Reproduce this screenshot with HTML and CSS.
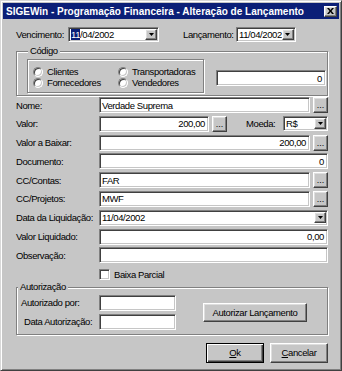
FILE: index.html
```html
<!DOCTYPE html>
<html>
<head>
<meta charset="utf-8">
<link rel="stylesheet" href="styles.css">
</head>
<body>
<div class="window">
  <div class="titlebar">
    <span class="title">SIGEWin - Programação Financeira - Alteração de Lançamento</span>
    <span class="close btn"><svg width="7" height="6" viewBox="0 0 7 6"><path d="M0 0h2l1.5 2 1.5-2h2l-2.5 3 2.5 3h-2l-1.5-2-1.5 2h-2l2.5-3z" fill="#000"/></svg></span>
  </div>
  <div class="content">
    <div class="row-top">
      <span class="lbl l-venc">Vencimento:</span>
      <div class="field combo c-venc"><span class="val"><span class="sel">11</span>/04/2002</span><span class="btn arrow"><svg width="5" height="3" viewBox="0 0 5 3"><path d="M0 0h5l-2.5 3z" fill="#000"/></svg></span></div>
      <span class="lbl l-lanc">Lançamento:</span>
      <div class="field combo c-lanc"><span class="val">11/04/2002</span><span class="btn arrow"><svg width="5" height="3" viewBox="0 0 5 3"><path d="M0 0h5l-2.5 3z" fill="#000"/></svg></span></div>
    </div>

    <div class="group g-codigo">
      <span class="legend">Código</span>
      <div class="group-body">
        <div class="panel">
          <div class="radios">
            <label class="radio"><span class="rb"></span>Clientes</label>
            <label class="radio"><span class="rb"></span>Transportadoras</label>
            <label class="radio"><span class="rb"></span>Fornecedores</label>
            <label class="radio"><span class="rb"></span>Vendedores</label>
          </div>
        </div>
        <div class="field num codigo-num">0</div>
      </div>
    </div>

    <div class="frow first">
      <span class="flbl">Nome:</span>
      <div class="field grow">Verdade Suprema</div>
      <span class="btn dots">...</span>
    </div>
    <div class="frow">
      <span class="flbl">Valor:</span>
      <div class="field num valor">200,00</div>
      <span class="btn dots">...</span>
      <span class="lbl l-moeda">Moeda:</span>
      <div class="field combo grow moeda"><span class="val">R$</span><span class="btn arrow"><svg width="5" height="3" viewBox="0 0 5 3"><path d="M0 0h5l-2.5 3z" fill="#000"/></svg></span></div>
    </div>
    <div class="frow">
      <span class="flbl">Valor a Baixar:</span>
      <div class="field num grow">200,00</div>
      <span class="btn dots">...</span>
    </div>
    <div class="frow">
      <span class="flbl">Documento:</span>
      <div class="field num grow">0</div>
    </div>
    <div class="frow">
      <span class="flbl">CC/Contas:</span>
      <div class="field grow">FAR</div>
      <span class="btn dots">...</span>
    </div>
    <div class="frow">
      <span class="flbl">CC/Projetos:</span>
      <div class="field grow">MWF</div>
      <span class="btn dots">...</span>
    </div>
    <div class="frow">
      <span class="flbl">Data da Liquidação:</span>
      <div class="field combo grow"><span class="val">11/04/2002</span><span class="btn arrow"><svg width="5" height="3" viewBox="0 0 5 3"><path d="M0 0h5l-2.5 3z" fill="#000"/></svg></span></div>
    </div>
    <div class="frow">
      <span class="flbl">Valor Liquidado:</span>
      <div class="field num grow">0,00</div>
    </div>
    <div class="frow">
      <span class="flbl">Observação:</span>
      <div class="field grow"></div>
    </div>
    <div class="check-row">
      <span class="cb"></span><span>Baixa Parcial</span>
    </div>

    <div class="group g-aut">
      <span class="legend">Autorização</span>
      <div class="group-body aut-body">
        <div class="aut-fields">
          <div class="arow"><span class="albl a1">Autorizado por:</span><div class="field afield"></div></div>
          <div class="arow"><span class="albl a2">Data Autorização:</span><div class="field afield"></div></div>
        </div>
        <span class="btn pbtn autorizar">Autorizar Lançamento</span>
      </div>
    </div>

    <div class="actions">
      <span class="btn pbtn ok default"><u>O</u>k</span>
      <span class="btn pbtn cancel"><u>C</u>ancelar</span>
    </div>
  </div>
</div>
</body>
</html>
```

FILE: styles.css
```css
* { box-sizing: border-box; }
html, body { margin: 0; padding: 0; }
body {
  width: 342px;
  height: 371px;
  overflow: hidden;
  background: #c6c6c6;
  font-family: "Liberation Sans", Arial, sans-serif;
  font-size: 9.5px;
  letter-spacing: -0.4px;
  color: #000;
}
.window {
  width: 342px;
  height: 371px;
  background: #c6c6c6;
  border: 1px solid;
  border-color: #d8d8d8 #404040 #404040 #d8d8d8;
  box-shadow: inset 1px 1px #fff, inset -1px -1px #808080;
  padding: 2px;
  display: flex;
  flex-direction: column;
}
.titlebar {
  height: 16px;
  flex: none;
  background: #0b1f77;
  color: #fff;
  display: flex;
  align-items: center;
  justify-content: space-between;
  padding: 0 2px 0 3px;
  font-weight: bold;
  font-size: 10px;
  letter-spacing: 0;
  white-space: nowrap;
}
.btn {
  background: #c6c6c6;
  border: 1px solid;
  border-color: #fff #404040 #404040 #fff;
  box-shadow: inset -1px -1px #808080, inset 1px 1px #dedede;
  display: flex;
  align-items: center;
  justify-content: center;
  flex: none;
}
.close { width: 13px; height: 11px; }
.content {
  flex: 1;
  display: flex;
  flex-direction: column;
  padding: 8px 11px 0 13px;
}
.lbl { white-space: nowrap; flex: none; }
.row-top {
  display: flex;
  align-items: center;
  height: 15px;
  flex: none;
}
.l-venc { width: 52px; }
.c-venc { width: 91px; }
.l-lanc { margin-left: 24px; width: 53px; }
.c-lanc { flex: 1; }
.field {
  height: 16px;
  background: #fff;
  border: 1px solid;
  border-color: #808080 #fff #fff #808080;
  box-shadow: inset 1px 1px #404040, inset -1px -1px #c6c6c6;
  padding: 0 3px 0 2px;
  display: flex;
  align-items: center;
  white-space: nowrap;
  overflow: hidden;
  flex: none;
}
.row-top .field { height: 15px; }
.grow { flex: 1; }
.num { justify-content: flex-end; }
.combo { padding: 0 1px 0 2px; }
.combo .val { flex: 1; }
.sel { background: #0b1f77; color: #fff; }
.arrow { width: 12px; height: 11px; margin-left: auto; }
.arrow svg { display: block; }

.group {
  border: 1px solid #808080;
  box-shadow: inset 1px 1px #fff, 1px 1px #fff;
  display: flex;
  flex-direction: column;
  flex: none;
}
.legend {
  align-self: flex-start;
  margin: -7px 0 0 1px;
  padding: 0 2px;
  line-height: 11px;
  height: 11px;
  background: #c6c6c6;
  white-space: nowrap;
}
.g-codigo {
  margin-top: 9px;
  padding: 0 1px 2px 10px;
}
.group-body { display: flex; align-items: flex-start; }
.panel {
  margin-top: 3px;
  width: 177px;
  height: 34px;
  border: 1px solid #808080;
  box-shadow: inset 1px 1px #fff, 1px 1px #fff;
  flex: none;
}
.radios {
  display: grid;
  grid-template-columns: 85px 1fr;
  grid-auto-rows: 11px;
  padding: 6px 0 0 5px;
}
.radio { display: flex; align-items: center; gap: 4px; white-space: nowrap; }
.rb, .cb {
  width: 10px;
  height: 10px;
  background: #fff;
  border: 1px solid;
  border-color: #808080 #fff #fff #808080;
  box-shadow: inset 1px 1px #404040, inset -1px -1px #c6c6c6;
  flex: none;
}
.rb { border-radius: 50%; }
.codigo-num { margin: 14px 0 0 12px; width: 110px; }

.frow {
  display: flex;
  align-items: center;
  height: 16px;
  margin-top: 2.8px;
  flex: none;
}
.frow.first { margin-top: 1px; }
.flbl { width: 83px; flex: none; white-space: nowrap; }
.dots {
  width: 15px;
  height: 16px;
  margin-left: 3px;
  align-items: flex-end;
  font-size: 9px;
  line-height: 9px;
  letter-spacing: 0;
  padding-bottom: 2px;
}
.valor { width: 110px; }
.l-moeda { margin-left: 19px; width: 37px; }
.moeda { height: 15px; }

.check-row {
  display: flex;
  align-items: center;
  gap: 4px;
  height: 12px;
  margin-top: 5.5px;
  padding-left: 83px;
  flex: none;
}
.cb { width: 11px; height: 11px; border-radius: 0; }

.g-aut {
  margin-top: 6px;
  padding: 0 0 4px 0;
}
.aut-body { align-items: center; margin-top: 3px; }
.aut-fields { display: flex; flex-direction: column; gap: 3px; }
.arow { display: flex; align-items: center; height: 16px; }
.albl { width: 82px; white-space: nowrap; }
.a1 { padding-left: 4px; }
.a2 { padding-left: 7px; }
.afield { width: 77px; }
.pbtn { white-space: nowrap; }
.autorizar { margin-left: 27px; width: 104px; height: 19px; }

.actions {
  display: flex;
  justify-content: flex-end;
  gap: 6px;
  margin-top: 8px;
  flex: none;
}
.ok, .cancel { width: 58px; height: 20px; }
.default {
  border: 1px solid #000;
  box-shadow: inset 1px 1px #fff, inset -1px -1px #404040, inset -2px -2px #808080;
}
u { text-decoration: underline; }
```
